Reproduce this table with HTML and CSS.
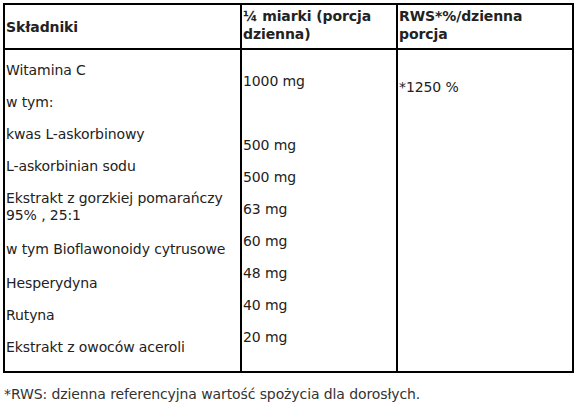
FILE: index.html
```html
<!DOCTYPE html>
<html lang="pl">
<head>
  <meta charset="UTF-8">
  <meta name="viewport" content="width=device-width, initial-scale=1.0">
  <title>Skład</title>
  <link rel="stylesheet" href="styles.css">
</head>
<body>
  <main class="sheet">
    <table class="facts">
      <colgroup>
        <col class="col-name">
        <col class="col-dose">
        <col class="col-rws">
      </colgroup>
      <thead>
        <tr>
          <th class="head-name">Składniki</th>
          <th>¼ miarki (porcja dzienna)</th>
          <th>RWS*%/dzienna porcja</th>
        </tr>
      </thead>
      <tbody>
        <tr class="body-row">
          <td class="cell-name">
            <p>Witamina C</p>
            <p>w tym:</p>
            <p>kwas L-askorbinowy</p>
            <p>L-askorbinian sodu</p>
            <p class="shift">Ekstrakt z gorzkiej pomarańczy<br>95% , 25:1</p>
            <p class="shift">w tym Bioflawonoidy cytrusowe</p>
            <p>Hesperydyna</p>
            <p>Rutyna</p>
            <p>Ekstrakt z owoców aceroli</p>
          </td>
          <td class="cell-dose">
            <p>1000 mg</p>
            <p>&nbsp;</p>
            <p>500 mg</p>
            <p>500 mg</p>
            <p>63 mg</p>
            <p>60 mg</p>
            <p>48 mg</p>
            <p>40 mg</p>
            <p>20 mg</p>
          </td>
          <td class="cell-rws">
            <p>*1250 %</p>
          </td>
        </tr>
      </tbody>
    </table>
    <p class="note">*RWS: dzienna referencyjna wartość spożycia dla dorosłych.</p>
  </main>
</body>
</html>
```

FILE: styles.css
```css
*, *::before, *::after {
  box-sizing: border-box;
}

body {
  margin: 0;
  background: #fff;
  color: #222;
  font-family: "DejaVu Sans", Verdana, sans-serif;
  font-size: 14px;
  letter-spacing: -0.1px;
}

.sheet {
  padding: 3px 0 0 3px;
}

.facts {
  border-collapse: collapse;
  width: 569px;
  table-layout: fixed;
}

.col-name { width: 237px; }
.col-dose { width: 156px; }
.col-rws { width: 176px; }

.facts th,
.facts td {
  border: 2px solid #000;
  padding: 0 0 0 1px;
  text-align: left;
  vertical-align: top;
}

.facts th {
  height: 45px;
  padding-top: 2px;
  font-weight: bold;
  line-height: 18px;
  color: #222;
}

.facts th.head-name {
  vertical-align: middle;
  padding-top: 0;
}

.body-row td {
  height: 319px;
}

.facts p {
  margin: 0 0 15px 0;
  line-height: 17px;
}

.cell-name {
  padding-top: 12px !important;
}

.cell-name .shift {
  margin-bottom: 17px;
}

.cell-dose {
  padding-top: 23px !important;
}

.cell-rws {
  padding-top: 29px !important;
}

.note {
  margin: 13px 0 0 1px;
  line-height: 17px;
  color: #333;
}
```
